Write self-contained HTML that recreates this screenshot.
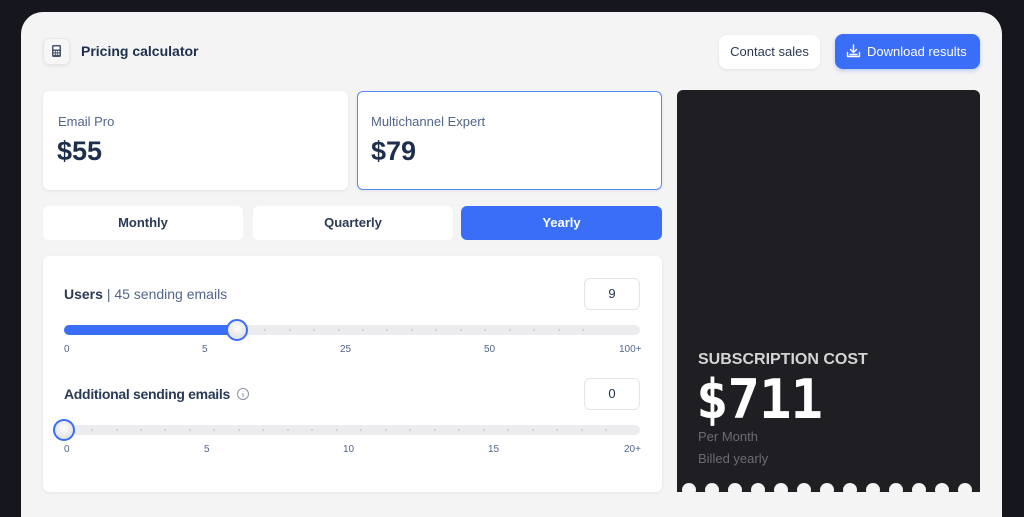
<!DOCTYPE html>
<html style="overflow:hidden;height:517px"><head><style>
*{box-sizing:border-box;margin:0;padding:0}
body{width:1024px;height:517px;background:#16161e;font-family:"Liberation Sans",sans-serif;overflow:hidden;position:relative;color:#1e2f4d}
#wrap{position:relative;width:1024px;height:517px;overflow:hidden}
.card{position:absolute;left:21px;top:12px;width:981px;height:530px;background:#f4f4f5;border-radius:22px}
.abs{position:absolute}
.white{background:#fff;border-radius:6px;box-shadow:0 1px 3px rgba(0,0,0,.08)}
.lbl{font-size:13px;color:#52668a}
.price{font-size:27px;font-weight:bold;color:#1e2f4d}
.tab{position:absolute;top:206px;height:34px;width:200px;background:#fff;border-radius:6px;font-size:13px;font-weight:bold;text-align:center;line-height:34px;color:#2a3a55}
.track{position:absolute;left:64px;width:576px;height:10px;background:#ececee;border-radius:5px}
.dot{position:absolute;top:4px;width:2px;height:2px;background:#c9ccd3;border-radius:1px}
.thumb{position:absolute;width:22px;height:22px;border-radius:50%;border:2px solid #3b6ef6;background:radial-gradient(circle at 50% 40%,#fff,#d8d8da)}
.tk{position:absolute;font-size:10px;color:#52668a}
.box{position:absolute;left:584px;width:56px;height:32px;border:1px solid #e2e4e8;border-radius:6px;background:#fff;text-align:center;line-height:30px;font-size:13px}
</style></head><body><div id="wrap">
<div class="card"></div>
<div class="abs white" style="left:43px;top:38px;width:27px;height:27px;border-radius:6px;background:#f6f6f7;border:1px solid #e6e7ea"></div>
<svg class="abs" style="left:51px;top:44px" width="11" height="14" viewBox="0 0 11 14"><rect x="1" y="1" width="9" height="12" rx="1.5" fill="#46536d"/><rect x="2.5" y="2.5" width="6" height="3" fill="#fff"/><g fill="#fff"><rect x="2.5" y="7" width="1.5" height="1.3"/><rect x="4.8" y="7" width="1.5" height="1.3"/><rect x="7" y="7" width="1.5" height="1.3"/><rect x="2.5" y="9.5" width="1.5" height="1.3"/><rect x="4.8" y="9.5" width="1.5" height="1.3"/><rect x="7" y="9.5" width="1.5" height="1.3"/></g></svg>
<div class="abs" style="left:81px;top:43px;font-size:14px;font-weight:bold;color:#1e2f4d">Pricing calculator</div>
<div class="abs white" style="left:719px;top:35px;width:101px;height:34px;border-radius:8px;font-size:13px;line-height:34px;text-align:center;color:#2a3a55">Contact sales</div>
<div class="abs" style="left:835px;top:34px;width:145px;height:35px;border-radius:8px;background:#3b6ef6;box-shadow:0 2px 4px rgba(59,110,246,.3);color:#fff;font-size:13px;line-height:35px;padding-left:32px">Download results</div>
<svg class="abs" style="left:846px;top:44px" width="15" height="15" viewBox="0 0 15 15" fill="none" stroke="#fff" stroke-width="1.4" stroke-linecap="round" stroke-linejoin="round"><path d="M7.5 1v7M4.5 5.5l3 3 3-3M1.5 8.5v4h12v-4M4 10.5h7"/></svg>

<div class="abs white" style="left:43px;top:91px;width:305px;height:99px"></div>
<div class="abs lbl" style="left:58px;top:114px">Email Pro</div>
<div class="abs price" style="left:57px;top:136px">$55</div>
<div class="abs white" style="left:357px;top:91px;width:305px;height:99px;border:1.5px solid #5b86f7"></div>
<div class="abs lbl" style="left:371px;top:114px">Multichannel Expert</div>
<div class="abs price" style="left:371px;top:136px">$79</div>

<div class="tab" style="left:43px">Monthly</div>
<div class="tab" style="left:253px">Quarterly</div>
<div class="tab" style="left:461px;width:201px;background:#3b6ef6;color:#fff">Yearly</div>

<div class="abs white" style="left:43px;top:256px;width:619px;height:236px"></div>
<div class="abs" style="left:64px;top:286px;font-size:14px;font-weight:bold;color:#2a3a55">Users <span style="font-weight:normal;color:#52668a">| 45 sending emails</span></div>
<div class="box" style="top:278px">9</div>
<div class="track" style="top:325px"><div style="position:absolute;left:0;top:0;height:10px;width:175px;background:#3b6ef6;border-radius:5px"></div>
<div class="dot" style="left:200px"></div><div class="dot" style="left:225px"></div><div class="dot" style="left:249px"></div><div class="dot" style="left:274px"></div><div class="dot" style="left:298px"></div><div class="dot" style="left:322px"></div><div class="dot" style="left:347px"></div><div class="dot" style="left:371px"></div><div class="dot" style="left:396px"></div><div class="dot" style="left:420px"></div><div class="dot" style="left:445px"></div><div class="dot" style="left:469px"></div><div class="dot" style="left:494px"></div><div class="dot" style="left:518px"></div></div>
<div class="thumb" style="left:226px;top:319px"></div>
<div class="tk" style="left:64px;top:344px">0</div><div class="tk" style="left:202px;top:344px">5</div><div class="tk" style="left:340px;top:344px">25</div><div class="tk" style="left:484px;top:344px">50</div><div class="tk" style="left:619px;top:344px">100+</div>

<div class="abs" style="left:64px;top:386px;font-size:14px;font-weight:bold;color:#2a3a55;letter-spacing:-0.3px">Additional sending emails</div>
<svg class="abs" style="left:236px;top:387px" width="14" height="14" viewBox="0 0 14 14" fill="none" stroke="#8a93a3" stroke-width="1"><circle cx="7" cy="7" r="5.5"/><path d="M7 6v4M7 4.2v.6"/></svg>
<div class="box" style="top:378px">0</div>
<div class="track" style="top:425px">
<div class="dot" style="left:27px"></div><div class="dot" style="left:52px"></div><div class="dot" style="left:76px"></div><div class="dot" style="left:100px"></div><div class="dot" style="left:125px"></div><div class="dot" style="left:149px"></div><div class="dot" style="left:174px"></div><div class="dot" style="left:198px"></div><div class="dot" style="left:223px"></div><div class="dot" style="left:247px"></div><div class="dot" style="left:272px"></div><div class="dot" style="left:296px"></div><div class="dot" style="left:321px"></div><div class="dot" style="left:345px"></div><div class="dot" style="left:370px"></div><div class="dot" style="left:394px"></div><div class="dot" style="left:419px"></div><div class="dot" style="left:443px"></div><div class="dot" style="left:468px"></div><div class="dot" style="left:492px"></div><div class="dot" style="left:517px"></div><div class="dot" style="left:541px"></div></div>
<div class="thumb" style="left:53px;top:419px"></div>
<div class="tk" style="left:64px;top:444px">0</div><div class="tk" style="left:204px;top:444px">5</div><div class="tk" style="left:343px;top:444px">10</div><div class="tk" style="left:488px;top:444px">15</div><div class="tk" style="left:624px;top:444px">20+</div>

<div class="abs" style="left:677px;top:90px;width:303px;height:402px;background:#1f1f23;border-radius:6px 6px 0 0;overflow:hidden">
<div class="abs" style="left:21px;top:261px;font-size:16px;font-weight:bold;color:#d4d4d6">SUBSCRIPTION COST</div>
<div class="abs" style="left:19px;top:280px;font-size:54px;font-weight:bold;color:#fff;font-family:'DejaVu Sans Mono','Liberation Mono',monospace;letter-spacing:-1px;line-height:60px">$711</div>
<div class="abs" style="left:21px;top:339px;font-size:13px;color:#6b6b70">Per Month</div>
<div class="abs" style="left:21px;top:361px;font-size:13px;color:#6b6b70">Billed yearly</div>
<svg class="abs" style="left:0;top:390px" width="303" height="14"><g fill="#f4f4f5">
<circle cx="12" cy="10" r="7"/><circle cx="35" cy="10" r="7"/><circle cx="58" cy="10" r="7"/><circle cx="81" cy="10" r="7"/><circle cx="104" cy="10" r="7"/><circle cx="127" cy="10" r="7"/><circle cx="150" cy="10" r="7"/><circle cx="173" cy="10" r="7"/><circle cx="196" cy="10" r="7"/><circle cx="219" cy="10" r="7"/><circle cx="242" cy="10" r="7"/><circle cx="265" cy="10" r="7"/><circle cx="288" cy="10" r="7"/></g></svg>
</div>
</div></body></html>
